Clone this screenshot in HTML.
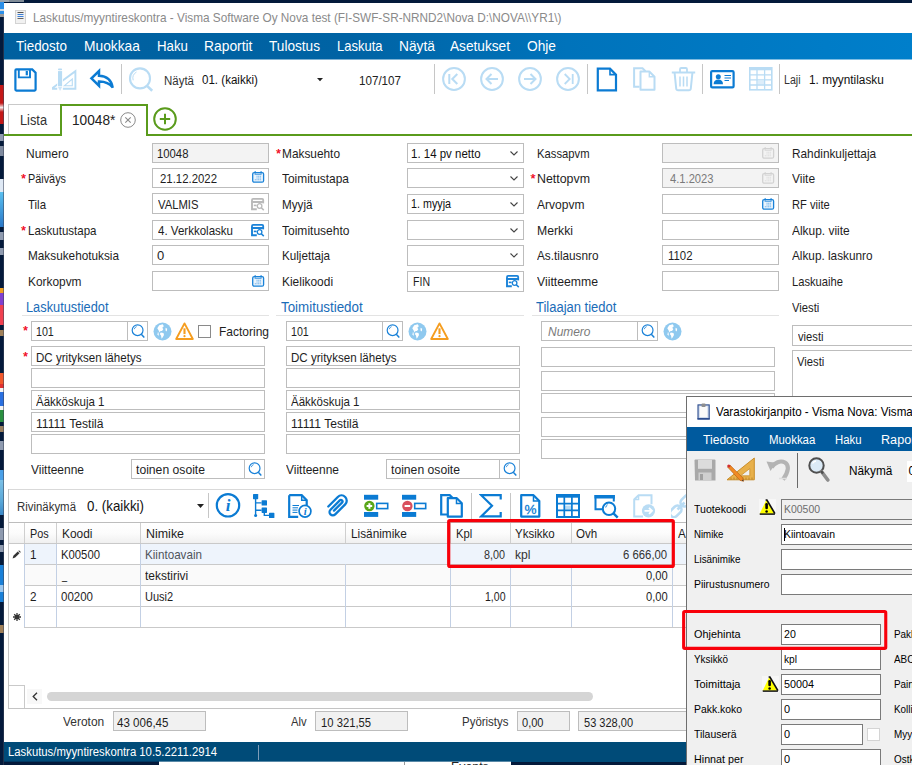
<!DOCTYPE html>
<html lang="fi"><head><meta charset="utf-8"><title>Laskutus/myyntireskontra</title>
<style>
html,body{margin:0;padding:0;overflow:hidden;}
body{width:912px;height:765px;overflow:hidden;position:relative;background:#fff;font-family:"Liberation Sans",sans-serif;}
#root{position:absolute;left:0;top:0;width:912px;height:765px;overflow:hidden;}
#root div,#root span,#root svg{position:absolute;box-sizing:border-box;white-space:pre;}
#root span{transform-origin:0 0;}

</style></head><body><div id="root">
<div style="left:0px;top:0px;width:912px;height:765px;background:#041a3b;"></div>
<div style="left:0px;top:0px;width:9px;height:2px;background:#9aa5b0;"></div>
<div style="left:9px;top:0px;width:15px;height:2px;background:#808c98;"></div>
<div style="left:0px;top:0px;width:4px;height:2px;background:#9aa5b0;"></div>
<div style="left:0px;top:2px;width:4px;height:7px;background:#2b8fe8;"></div>
<div style="left:0px;top:9px;width:4px;height:2px;background:#c9d6e2;"></div>
<div style="left:0px;top:11px;width:4px;height:3px;background:#2b8fe8;"></div>
<div style="left:0px;top:14px;width:4px;height:3px;background:#9a9a9a;"></div>
<div style="left:0px;top:85px;width:4px;height:18px;background:#c41818;"></div>
<div style="left:0px;top:103px;width:4px;height:9px;background:linear-gradient(#c41818,#f4e9e9 50%,#c41818);"></div>
<div style="left:0px;top:112px;width:4px;height:12px;background:#c41818;"></div>
<div style="left:0px;top:134px;width:4px;height:7px;background:#8f9bb0;"></div>
<div style="left:0px;top:146px;width:4px;height:10px;background:#7f8ba0;"></div>
<div style="left:0px;top:179px;width:4px;height:13px;background:#dfe9f5;"></div>
<div style="left:0px;top:192px;width:4px;height:35px;background:linear-gradient(#5ac0f0,#2a78c8);"></div>
<div style="left:0px;top:232px;width:4px;height:8px;background:#8f9bb0;"></div>
<div style="left:0px;top:248px;width:4px;height:7px;background:#8f9bb0;"></div>
<div style="left:0px;top:288px;width:4px;height:5px;background:#f0a020;"></div>
<div style="left:0px;top:293px;width:4px;height:12px;background:#8040d0;"></div>
<div style="left:0px;top:305px;width:4px;height:20px;background:#f04050;"></div>
<div style="left:0px;top:330px;width:4px;height:6px;background:#a0805a;"></div>
<div style="left:0px;top:373px;width:4px;height:11px;background:#f0582c;"></div>
<div style="left:0px;top:384px;width:4px;height:4px;background:#e03030;"></div>
<div style="left:0px;top:388px;width:4px;height:4px;background:#f4f4f4;"></div>
<div style="left:0px;top:392px;width:4px;height:14px;background:#2a70e0;"></div>
<div style="left:0px;top:406px;width:4px;height:4px;background:#f4f4f4;"></div>
<div style="left:0px;top:410px;width:4px;height:12px;background:#2a9040;"></div>
<div style="left:0px;top:426px;width:4px;height:6px;background:#9a8060;"></div>
<div style="left:0px;top:441px;width:4px;height:9px;background:#8f9bb0;"></div>
<div style="left:0px;top:470px;width:4px;height:10px;background:#4aa0e8;"></div>
<div style="left:0px;top:480px;width:4px;height:35px;background:linear-gradient(#7cc0e6,#5aa8d8 60%,#3a88c8);"></div>
<div style="left:0px;top:528px;width:4px;height:12px;background:#8f9bb0;"></div>
<div style="left:0px;top:545px;width:4px;height:7px;background:#8f9bb0;"></div>
<div style="left:0px;top:565px;width:4px;height:20px;background:#1a80d8;"></div>
<div style="left:0px;top:585px;width:4px;height:7px;background:#9cc8f0;"></div>
<div style="left:0px;top:592px;width:4px;height:10px;background:#1a80d8;"></div>
<div style="left:0px;top:625px;width:4px;height:8px;background:#a0805a;"></div>
<div style="left:3px;top:17px;width:1px;height:748px;background:rgba(60,70,90,0.55);"></div>
<div style="left:4px;top:3px;width:908px;height:759px;background:#ffffff;"></div>
<div style="left:4px;top:762px;width:155px;height:3px;background:#041a3b;"></div>
<div style="left:159px;top:762px;width:352px;height:3px;background:#ffffff;"></div>
<div style="left:404px;top:762px;width:1px;height:3px;background:#999;"></div>
<div style="left:511px;top:762px;width:401px;height:3px;background:#041a3b;"></div>
<svg style="left:15px;top:10px;" width="11" height="14" viewBox="0 0 11 14"><rect x="0.5" y="0.5" width="10" height="13" fill="#f1f1f1" stroke="#d3d3d3"/><rect x="2.5" y="2" width="6" height="1" fill="#555"/><rect x="2.5" y="4" width="6" height="1" fill="#3d7fd6"/><rect x="2.5" y="6" width="6" height="1" fill="#3d7fd6"/><rect x="2.5" y="8" width="6" height="1" fill="#666"/></svg>
<span style="left:32.80px;top:11.00px;font-size:13px;line-height:13px;color:#8a8a8a;transform:scaleX(0.906);">Laskutus/myyntireskontra - Visma Software Oy Nova test (FI-SWF-SR-NRND2\Nova D:\NOVA\\YR1\)</span>
<div style="left:4px;top:33px;width:908px;height:27px;background:linear-gradient(90deg,#00609f 0%,#0063a4 38%,#0073bb 62%,#007fcb 100%);"></div>
<div style="left:4px;top:59px;width:908px;height:1px;background:rgba(255,255,255,0.5);"></div>
<span style="left:15.50px;top:38.68px;font-size:14.2px;line-height:14.2px;color:#fff;transform:scaleX(0.946);">Tiedosto</span>
<span style="left:83.50px;top:38.68px;font-size:14.2px;line-height:14.2px;color:#fff;transform:scaleX(0.972);">Muokkaa</span>
<span style="left:156.50px;top:38.68px;font-size:14.2px;line-height:14.2px;color:#fff;transform:scaleX(0.935);">Haku</span>
<span style="left:203.50px;top:38.68px;font-size:14.2px;line-height:14.2px;color:#fff;transform:scaleX(0.975);">Raportit</span>
<span style="left:268.50px;top:38.68px;font-size:14.2px;line-height:14.2px;color:#fff;transform:scaleX(0.960);">Tulostus</span>
<span style="left:336.50px;top:38.68px;font-size:14.2px;line-height:14.2px;color:#fff;transform:scaleX(0.915);">Laskuta</span>
<span style="left:398.50px;top:38.68px;font-size:14.2px;line-height:14.2px;color:#fff;transform:scaleX(0.970);">Näytä</span>
<span style="left:450.00px;top:38.68px;font-size:14.2px;line-height:14.2px;color:#fff;transform:scaleX(0.962);">Asetukset</span>
<span style="left:526.50px;top:38.68px;font-size:14.2px;line-height:14.2px;color:#fff;transform:scaleX(0.967);">Ohje</span>
<div style="left:121px;top:64px;width:1px;height:30px;background:#c6c6c6;"></div>
<div style="left:434px;top:64px;width:1px;height:30px;background:#c6c6c6;"></div>
<div style="left:587px;top:64px;width:1px;height:30px;background:#c6c6c6;"></div>
<div style="left:702px;top:64px;width:1px;height:30px;background:#c6c6c6;"></div>
<div style="left:779px;top:64px;width:1px;height:30px;background:#c6c6c6;"></div>
<span style="left:164.30px;top:74.59px;font-size:12.3px;line-height:12.3px;color:#333;transform:scaleX(0.934);">Näytä</span>
<span style="left:201.50px;top:74.14px;font-size:12px;line-height:12px;color:#111;transform:scaleX(0.964);">01. (kaikki)</span>
<svg style="left:316.5px;top:78.2px;" width="6" height="4" viewBox="0 0 6 4"><path d="M0 0h6l-3 3.200z" fill="#222"/></svg>
<span style="left:358.70px;top:74.84px;font-size:12px;line-height:12px;color:#222;transform:scaleX(0.968);">107/107</span>
<span style="left:784.30px;top:74.22px;font-size:12.5px;line-height:12.5px;color:#333;transform:scaleX(0.848);">Laji</span>
<span style="left:809.40px;top:73.64px;font-size:12px;line-height:12px;color:#111;transform:scaleX(0.984);">1. myyntilasku</span>
<div style="left:8px;top:104px;width:53px;height:31px;background:#fff;border:1px solid #c9c9c9;"></div>
<div style="left:4px;top:134px;width:908px;height:2px;background:#5a9b1c;"></div>
<div style="left:60px;top:104px;width:88px;height:32px;background:#fff;border:2px solid #5a9b1c;border-bottom:none;"></div>
<span style="left:20.00px;top:112.65px;font-size:14px;line-height:14px;color:#333;transform:scaleX(0.913);">Lista</span>
<span style="left:71.80px;top:112.65px;font-size:14px;line-height:14px;color:#222;transform:scaleX(0.978);">10048*</span>
<svg style="left:120px;top:112px;" width="16" height="16" viewBox="0 0 16 16"><circle cx="8" cy="8" r="7.3" fill="none" stroke="#8a8a8a" stroke-width="1"/><path d="M5.3 5.3l5.4 5.4M10.7 5.3l-5.4 5.4" stroke="#8a8a8a" stroke-width="1.1"/></svg>
<svg style="left:153px;top:107px;" width="24" height="24" viewBox="0 0 24 24"><circle cx="12" cy="12" r="10.8" fill="none" stroke="#5a9b1c" stroke-width="2"/><path d="M12 6.8v10.4M6.8 12h10.4" stroke="#5a9b1c" stroke-width="2"/></svg>
<svg style="left:14px;top:67.5px;" width="24" height="24" viewBox="0 0 24 24"><path d="M1.400 2.400a1 1 0 0 1 1-1h15.800l3.400 3.400v16.800a1 1 0 0 1-1 1H2.400a1 1 0 0 1-1-1z" fill="#fff" stroke="#0b7bd3" stroke-width="2.200"/><path d="M4.800 1.400v8h11.200v-8" fill="none" stroke="#0b7bd3" stroke-width="1.900"/><rect x="11.700" y="3" width="2.200" height="4.300" fill="#0b7bd3"/></svg>
<svg style="left:52px;top:67.5px;" width="25" height="24" viewBox="0 0 25 24"><path d="M-0.500 20.800L23.400 3.200V20.800z" fill="none" stroke="#b9dcf4" stroke-width="1.900"/><path d="M12.200 17.800L20.300 11V17.800z" fill="none" stroke="#b9dcf4" stroke-width="1.100"/><rect x="5.200" y="0" width="5.700" height="24" fill="#fff"/><rect x="6" y="0.600" width="4.100" height="1.700" rx="0.800" fill="#b9dcf4"/><rect x="6" y="3.100" width="4.100" height="15.200" fill="#b9dcf4"/><path d="M6 18.900h4.100l-2.050 4z" fill="#cfe6f7"/></svg>
<svg style="left:89px;top:68px;" width="26" height="23" viewBox="0 0 26 23"><path d="M2.400 10.300L10 3V7.800C17 8 22.300 11.500 23.700 19.600C20.500 15.300 16.500 13.500 10 13.600V17.700z" fill="#fff" stroke="#0b7bd3" stroke-width="2.500" stroke-linejoin="miter"/></svg>
<svg style="left:128px;top:66.5px;" width="26" height="26" viewBox="0 0 26 26"><circle cx="12" cy="11.400" r="10" fill="none" stroke="#b9dcf4" stroke-width="2.100"/><path d="M5.200 13.300a7.300 7.300 0 0 1 3.300-8.300" fill="none" stroke="#b9dcf4" stroke-width="1"/><path d="M18.800 18.600l5.400 5.200" stroke="#b9dcf4" stroke-width="2.600"/></svg>
<svg style="left:441.2px;top:65.9px;" width="26" height="26" viewBox="0 0 26 26"><circle cx="13" cy="13" r="10.900" fill="none" stroke="#b9dcf4" stroke-width="2"/><path d="M8.300 8v10M16.300 8l-5 5l5 5" fill="none" stroke="#b9dcf4" stroke-width="2"/></svg>
<svg style="left:479.1px;top:65.9px;" width="26" height="26" viewBox="0 0 26 26"><circle cx="13" cy="13" r="10.900" fill="none" stroke="#b9dcf4" stroke-width="2"/><path d="M7.500 13h11.500M12.500 8l-5 5l5 5" fill="none" stroke="#b9dcf4" stroke-width="2"/></svg>
<svg style="left:516.9px;top:65.9px;" width="26" height="26" viewBox="0 0 26 26"><circle cx="13" cy="13" r="10.900" fill="none" stroke="#b9dcf4" stroke-width="2"/><path d="M7 13h11.500M13.500 8l5 5l-5 5" fill="none" stroke="#b9dcf4" stroke-width="2"/></svg>
<svg style="left:554.8px;top:65.9px;" width="26" height="26" viewBox="0 0 26 26"><circle cx="13" cy="13" r="10.900" fill="none" stroke="#b9dcf4" stroke-width="2"/><path d="M17.700 8v10M9.700 8l5 5l-5 5" fill="none" stroke="#b9dcf4" stroke-width="1.800"/></svg>
<svg style="left:596px;top:66.5px;" width="22" height="25" viewBox="0 0 22 25"><path d="M1.800 1.600h12.200l6 6v15.700H1.800z" fill="#fff" stroke="#0b7bd3" stroke-width="2.200" stroke-linejoin="miter"/><path d="M14 1.600v6h6" fill="none" stroke="#0b7bd3" stroke-width="1.600"/></svg>
<svg style="left:633px;top:67px;" width="24" height="24" viewBox="0 0 24 24"><path d="M6.500 19.800H1.100V1.200h8.400l3 3" fill="none" stroke="#b9dcf4" stroke-width="2"/><path d="M7.500 4.500h8.800l5.200 5.200v13H7.500z" fill="#fff" stroke="#b9dcf4" stroke-width="2" stroke-linejoin="round"/><path d="M16.300 4.500v5.200h5.200" fill="none" stroke="#b9dcf4" stroke-width="1.400"/></svg>
<svg style="left:670.5px;top:66.5px;" width="25" height="25" viewBox="0 0 25 25"><path d="M0.800 5.500h23.400" stroke="#b9dcf4" stroke-width="2"/><path d="M9 5v-2.800a1.200 1.200 0 0 1 1.200-1.200h4.600a1.200 1.200 0 0 1 1.200 1.200V5" fill="none" stroke="#b9dcf4" stroke-width="1.800"/><path d="M3.600 6l1.600 15.500a2 2 0 0 0 2 1.800h10.600a2 2 0 0 0 2-1.800L21.400 6" fill="none" stroke="#b9dcf4" stroke-width="2"/><path d="M9 9.500v10M12.500 9.500v10M16 9.500v10" stroke="#b9dcf4" stroke-width="1.500"/></svg>
<svg style="left:709.5px;top:69.5px;" width="25" height="19" viewBox="0 0 25 19"><rect x="1.100" y="1.100" width="22.500" height="16.300" rx="1.200" fill="#fff" stroke="#0b7bd3" stroke-width="2.200"/><circle cx="8.300" cy="6.700" r="2.500" fill="#0b7bd3"/><path d="M3.600 14.200c0-3.200 2-4.700 4.700-4.700s4.700 1.500 4.700 4.700z" fill="#0b7bd3"/><path d="M14.500 5.500h6.500M14.500 8h6.500M14.500 10.500h4.500" stroke="#0b7bd3" stroke-width="1.100"/></svg>
<svg style="left:748.5px;top:67px;" width="24" height="24" viewBox="0 0 24 24"><rect x="0.800" y="0.800" width="22" height="22" fill="#fff" stroke="#b9dcf4" stroke-width="1.600"/><rect x="0.800" y="0.300" width="22" height="3" fill="#b9dcf4"/><rect x="8.600" y="13.800" width="6.500" height="3.800" fill="#dcedfa"/><path d="M8 2v21M15.600 2v21M0.800 7.800h22M0.800 12.900h22M0.800 18h22" stroke="#b9dcf4" stroke-width="1.300"/></svg>
<span style="left:26.00px;top:147.40px;font-size:13px;line-height:13px;color:#1e1e1e;transform:scaleX(0.923);">Numero</span>
<span style="left:27.50px;top:172.30px;font-size:13px;line-height:13px;color:#1e1e1e;transform:scaleX(0.835);">Päiväys</span>
<span style="left:27.50px;top:197.70px;font-size:13px;line-height:13px;color:#1e1e1e;transform:scaleX(0.880);">Tila</span>
<span style="left:27.50px;top:223.50px;font-size:13px;line-height:13px;color:#1e1e1e;transform:scaleX(0.886);">Laskutustapa</span>
<span style="left:27.50px;top:248.80px;font-size:13px;line-height:13px;color:#1e1e1e;transform:scaleX(0.906);">Maksukehotuksia</span>
<span style="left:27.50px;top:274.90px;font-size:13px;line-height:13px;color:#1e1e1e;transform:scaleX(0.914);">Korkopvm</span>
<span style="left:20.90px;top:172.00px;font-size:13px;line-height:13px;color:#f0142a;text-shadow:0 0 0.4px #f0142a;">*</span>
<span style="left:20.90px;top:224.00px;font-size:13px;line-height:13px;color:#f0142a;text-shadow:0 0 0.4px #f0142a;">*</span>
<div style="left:152px;top:143px;width:117px;height:20px;background:#f3f3f3;border:1px solid #bdbdbd;"></div>
<div style="left:152px;top:168px;width:117px;height:20px;background:#fff;border:1px solid #bdbdbd;"></div>
<div style="left:152px;top:193px;width:117px;height:21px;background:#fff;border:1px solid #bdbdbd;"></div>
<div style="left:152px;top:220px;width:117px;height:20px;background:#fff;border:1px solid #bdbdbd;"></div>
<div style="left:152px;top:245px;width:117px;height:20px;background:#fff;border:1px solid #bdbdbd;"></div>
<div style="left:152px;top:271px;width:117px;height:20px;background:#fff;border:1px solid #bdbdbd;"></div>
<span style="left:157.30px;top:147.40px;font-size:13px;line-height:13px;color:#1e1e1e;transform:scaleX(0.869);">10048</span>
<span style="left:159.50px;top:172.30px;font-size:13px;line-height:13px;color:#1e1e1e;transform:scaleX(0.876);">21.12.2022</span>
<span style="left:157.50px;top:197.70px;font-size:13px;line-height:13px;color:#1e1e1e;transform:scaleX(0.867);">VALMIS</span>
<span style="left:157.50px;top:223.50px;font-size:13px;line-height:13px;color:#1e1e1e;transform:scaleX(0.887);">4. Verkkolasku</span>
<span style="left:157.00px;top:248.80px;font-size:13px;line-height:13px;color:#1e1e1e;">0</span>
<svg style="left:251.5px;top:171.29999999999998px;" width="13" height="12" viewBox="0 0 13 12"><rect x="0.700" y="1.600" width="10.900" height="9.600" rx="1.500" fill="#eaf4fc" stroke="#1a82d8" stroke-width="1.300"/><path d="M3.200 0.200v2.200M9.100 0.200v2.200" stroke="#1a82d8" stroke-width="1.300"/><path d="M2.600 3.300h7" stroke="#1a82d8" stroke-width="0.800"/><path d="M4.500 5.200h5M4.500 7h5M2.800 8.800h6.700" stroke="#6db0ea" stroke-width="1.100" stroke-dasharray="1.100 0.550"/></svg>
<svg style="left:251px;top:198.10000000000002px;" width="14" height="13" viewBox="0 0 14 13"><rect x="1" y="0.900" width="11.200" height="3.100" rx="1.100" fill="none" stroke="#b9b9b9" stroke-width="1.800"/><path d="M1 3v8.200h4.800" fill="none" stroke="#b9b9b9" stroke-width="1.900"/><path d="M12.200 3v2.400" stroke="#b9b9b9" stroke-width="1.800"/><path d="M2.800 7.400h2.800" stroke="#b9b9b9" stroke-width="1.600"/><circle cx="8.600" cy="8" r="2.300" fill="none" stroke="#b9b9b9" stroke-width="1.300"/><path d="M10.300 9.700l2.500 2.400" stroke="#b9b9b9" stroke-width="1.500"/></svg>
<svg style="left:251px;top:224.3px;" width="14" height="13" viewBox="0 0 14 13"><rect x="1" y="0.900" width="11.200" height="3.100" rx="1.100" fill="none" stroke="#1a82d8" stroke-width="1.800"/><path d="M1 3v8.200h4.800" fill="none" stroke="#1a82d8" stroke-width="1.900"/><path d="M12.200 3v2.400" stroke="#1a82d8" stroke-width="1.800"/><path d="M2.800 7.400h2.800" stroke="#1a82d8" stroke-width="1.600"/><circle cx="8.600" cy="8" r="2.300" fill="none" stroke="#1a82d8" stroke-width="1.300"/><path d="M10.300 9.700l2.500 2.400" stroke="#1a82d8" stroke-width="1.500"/></svg>
<svg style="left:251.5px;top:275.1px;" width="13" height="12" viewBox="0 0 13 12"><rect x="0.700" y="1.600" width="10.900" height="9.600" rx="1.500" fill="#eaf4fc" stroke="#1a82d8" stroke-width="1.300"/><path d="M3.200 0.200v2.200M9.100 0.200v2.200" stroke="#1a82d8" stroke-width="1.300"/><path d="M2.600 3.300h7" stroke="#1a82d8" stroke-width="0.800"/><path d="M4.500 5.200h5M4.500 7h5M2.800 8.800h6.700" stroke="#6db0ea" stroke-width="1.100" stroke-dasharray="1.100 0.550"/></svg>
<span style="left:282.00px;top:147.40px;font-size:13px;line-height:13px;color:#1e1e1e;transform:scaleX(0.912);">Maksuehto</span>
<span style="left:282.00px;top:172.30px;font-size:13px;line-height:13px;color:#1e1e1e;transform:scaleX(0.918);">Toimitustapa</span>
<span style="left:282.00px;top:197.70px;font-size:13px;line-height:13px;color:#1e1e1e;transform:scaleX(0.898);">Myyjä</span>
<span style="left:282.00px;top:223.50px;font-size:13px;line-height:13px;color:#1e1e1e;transform:scaleX(0.925);">Toimitusehto</span>
<span style="left:282.00px;top:248.80px;font-size:13px;line-height:13px;color:#1e1e1e;transform:scaleX(0.898);">Kuljettaja</span>
<span style="left:282.00px;top:274.90px;font-size:13px;line-height:13px;color:#1e1e1e;transform:scaleX(0.917);">Kielikoodi</span>
<span style="left:275.90px;top:147.00px;font-size:13px;line-height:13px;color:#f0142a;text-shadow:0 0 0.4px #f0142a;">*</span>
<div style="left:407px;top:143px;width:117px;height:20px;background:#fff;border:1px solid #bdbdbd;"></div>
<svg style="left:509.5px;top:151px;" width="8" height="5" viewBox="0 0 8 5"><path d="M0.5 0.5l3.5 3.5l3.5-3.5" fill="none" stroke="#444" stroke-width="1.1"/></svg>
<div style="left:407px;top:168px;width:117px;height:20px;background:#fff;border:1px solid #bdbdbd;"></div>
<svg style="left:509.5px;top:176px;" width="8" height="5" viewBox="0 0 8 5"><path d="M0.5 0.5l3.5 3.5l3.5-3.5" fill="none" stroke="#444" stroke-width="1.1"/></svg>
<div style="left:407px;top:194px;width:117px;height:20px;background:#fff;border:1px solid #bdbdbd;"></div>
<svg style="left:509.5px;top:202px;" width="8" height="5" viewBox="0 0 8 5"><path d="M0.5 0.5l3.5 3.5l3.5-3.5" fill="none" stroke="#444" stroke-width="1.1"/></svg>
<div style="left:407px;top:220px;width:117px;height:20px;background:#fff;border:1px solid #bdbdbd;"></div>
<svg style="left:509.5px;top:228px;" width="8" height="5" viewBox="0 0 8 5"><path d="M0.5 0.5l3.5 3.5l3.5-3.5" fill="none" stroke="#444" stroke-width="1.1"/></svg>
<div style="left:407px;top:245px;width:117px;height:21px;background:#fff;border:1px solid #bdbdbd;"></div>
<svg style="left:509.5px;top:253px;" width="8" height="5" viewBox="0 0 8 5"><path d="M0.5 0.5l3.5 3.5l3.5-3.5" fill="none" stroke="#444" stroke-width="1.1"/></svg>
<div style="left:407px;top:271px;width:117px;height:21px;background:#fff;border:1px solid #bdbdbd;"></div>
<span style="left:410.50px;top:147.74px;font-size:12px;line-height:12px;color:#111;transform:scaleX(0.956);">1. 14 pv netto</span>
<span style="left:410.50px;top:198.04px;font-size:12px;line-height:12px;color:#111;transform:scaleX(0.895);">1. myyja</span>
<span style="left:413.20px;top:274.90px;font-size:13px;line-height:13px;color:#1e1e1e;transform:scaleX(0.812);">FIN</span>
<svg style="left:506px;top:275.3px;" width="14" height="13" viewBox="0 0 14 13"><rect x="1" y="0.900" width="11.200" height="3.100" rx="1.100" fill="none" stroke="#1a82d8" stroke-width="1.800"/><path d="M1 3v8.200h4.800" fill="none" stroke="#1a82d8" stroke-width="1.900"/><path d="M12.200 3v2.400" stroke="#1a82d8" stroke-width="1.800"/><path d="M2.800 7.400h2.800" stroke="#1a82d8" stroke-width="1.600"/><circle cx="8.600" cy="8" r="2.300" fill="none" stroke="#1a82d8" stroke-width="1.300"/><path d="M10.300 9.700l2.500 2.400" stroke="#1a82d8" stroke-width="1.500"/></svg>
<span style="left:536.50px;top:147.40px;font-size:13px;line-height:13px;color:#1e1e1e;transform:scaleX(0.865);">Kassapvm</span>
<span style="left:536.50px;top:172.30px;font-size:13px;line-height:13px;color:#1e1e1e;transform:scaleX(0.953);">Nettopvm</span>
<span style="left:536.50px;top:197.70px;font-size:13px;line-height:13px;color:#1e1e1e;transform:scaleX(0.926);">Arvopvm</span>
<span style="left:536.50px;top:223.50px;font-size:13px;line-height:13px;color:#1e1e1e;transform:scaleX(0.940);">Merkki</span>
<span style="left:536.50px;top:248.80px;font-size:13px;line-height:13px;color:#1e1e1e;transform:scaleX(0.905);">As.tilausnro</span>
<span style="left:536.50px;top:274.90px;font-size:13px;line-height:13px;color:#1e1e1e;transform:scaleX(0.942);">Viitteemme</span>
<span style="left:530.40px;top:172.00px;font-size:13px;line-height:13px;color:#f0142a;text-shadow:0 0 0.4px #f0142a;">*</span>
<div style="left:662px;top:143px;width:117px;height:20px;background:#f3f3f3;border:1px solid #bdbdbd;"></div>
<div style="left:662px;top:168px;width:117px;height:20px;background:#f3f3f3;border:1px solid #bdbdbd;"></div>
<div style="left:662px;top:194px;width:117px;height:20px;background:#fff;border:1px solid #bdbdbd;"></div>
<div style="left:662px;top:220px;width:117px;height:20px;background:#fff;border:1px solid #bdbdbd;"></div>
<div style="left:662px;top:245px;width:117px;height:20px;background:#fff;border:1px solid #bdbdbd;"></div>
<div style="left:662px;top:271px;width:117px;height:20px;background:#fff;border:1px solid #bdbdbd;"></div>
<svg style="left:762px;top:147.1px;" width="13" height="12" viewBox="0 0 13 12"><rect x="0.700" y="1.600" width="10.900" height="9.600" rx="1.500" fill="#f3f3f3" stroke="#d2d2d2" stroke-width="1.300"/><path d="M3.200 0.200v2.200M9.100 0.200v2.200" stroke="#d2d2d2" stroke-width="1.300"/><path d="M2.600 3.300h7" stroke="#d2d2d2" stroke-width="0.800"/><path d="M4.500 5.200h5M4.500 7h5M2.800 8.800h6.700" stroke="#dcdcdc" stroke-width="1.100" stroke-dasharray="1.100 0.550"/></svg>
<svg style="left:762px;top:172.1px;" width="13" height="12" viewBox="0 0 13 12"><rect x="0.700" y="1.600" width="10.900" height="9.600" rx="1.500" fill="#f3f3f3" stroke="#d2d2d2" stroke-width="1.300"/><path d="M3.200 0.200v2.200M9.100 0.200v2.200" stroke="#d2d2d2" stroke-width="1.300"/><path d="M2.600 3.300h7" stroke="#d2d2d2" stroke-width="0.800"/><path d="M4.500 5.200h5M4.500 7h5M2.800 8.800h6.700" stroke="#dcdcdc" stroke-width="1.100" stroke-dasharray="1.100 0.550"/></svg>
<svg style="left:762px;top:198.1px;" width="13" height="12" viewBox="0 0 13 12"><rect x="0.700" y="1.600" width="10.900" height="9.600" rx="1.500" fill="#eaf4fc" stroke="#1a82d8" stroke-width="1.300"/><path d="M3.200 0.200v2.200M9.100 0.200v2.200" stroke="#1a82d8" stroke-width="1.300"/><path d="M2.600 3.300h7" stroke="#1a82d8" stroke-width="0.800"/><path d="M4.500 5.200h5M4.500 7h5M2.800 8.800h6.700" stroke="#6db0ea" stroke-width="1.100" stroke-dasharray="1.100 0.550"/></svg>
<span style="left:669.50px;top:172.30px;font-size:13px;line-height:13px;color:#7a7a7a;transform:scaleX(0.860);">4.1.2023</span>
<span style="left:667.50px;top:248.80px;font-size:13px;line-height:13px;color:#1e1e1e;transform:scaleX(0.876);">1102</span>
<span style="left:791.80px;top:147.40px;font-size:13px;line-height:13px;color:#1e1e1e;transform:scaleX(0.909);">Rahdinkuljettaja</span>
<span style="left:791.80px;top:172.30px;font-size:13px;line-height:13px;color:#1e1e1e;transform:scaleX(0.922);">Viite</span>
<span style="left:791.80px;top:197.70px;font-size:13px;line-height:13px;color:#1e1e1e;transform:scaleX(0.856);">RF viite</span>
<span style="left:791.80px;top:223.50px;font-size:13px;line-height:13px;color:#1e1e1e;transform:scaleX(0.918);">Alkup. viite</span>
<span style="left:791.80px;top:248.80px;font-size:13px;line-height:13px;color:#1e1e1e;transform:scaleX(0.906);">Alkup. laskunro</span>
<span style="left:791.80px;top:274.90px;font-size:13px;line-height:13px;color:#1e1e1e;transform:scaleX(0.859);">Laskuaihe</span>
<span style="left:26.00px;top:300.45px;font-size:14px;line-height:14px;color:#1a6cb8;transform:scaleX(0.914);">Laskutustiedot</span>
<div style="left:22px;top:315px;width:247px;height:1px;background:#e3e3e3;"></div>
<span style="left:22.90px;top:324.20px;font-size:13px;line-height:13px;color:#f0142a;text-shadow:0 0 0.4px #f0142a;">*</span>
<span style="left:22.90px;top:350.20px;font-size:13px;line-height:13px;color:#f0142a;text-shadow:0 0 0.4px #f0142a;">*</span>
<div style="left:31px;top:321px;width:117px;height:20px;background:#fff;border:1px solid #bdbdbd;"></div>
<div style="left:127px;top:322px;width:1px;height:18px;background:#bdbdbd;"></div>
<span style="left:36.00px;top:325.20px;font-size:13px;line-height:13px;color:#1e1e1e;transform:scaleX(0.821);">101</span>
<svg style="left:131px;top:324px;" width="14" height="14" viewBox="0 0 14 14"><circle cx="6.6" cy="6.2" r="5.4" fill="none" stroke="#1a82d8" stroke-width="1.2"/><path d="M3.2 5.2a3.6 3.6 0 0 1 2.4-2.6" fill="none" stroke="#1a82d8" stroke-width="0.8"/><path d="M10.3 10.2l3 3.2" stroke="#1a82d8" stroke-width="1.5"/></svg>
<svg style="left:152.5px;top:321.5px;" width="19" height="19" viewBox="0 0 19 19"><circle cx="9.5" cy="9.500" r="9" fill="#8fc9ef"/><path d="M6.200 3.200L9.800 2.300L10.800 4.300L9.300 5.800L10.300 7.300L9 9H7.500L6.700 10.600L5.500 8.300L4.300 6.200z" fill="#fff"/><path d="M7.800 10.500L10.500 11L11 13L9.600 15.400L8.600 16.700L8 13.500L6.800 12z" fill="#fff"/><path d="M12.600 5.800L14.200 6.800L13.700 9.600L12.500 8.600z" fill="#fff"/><path d="M5 9.500l1 2.500l-.3 2l-1.300-1.800z" fill="#fff" opacity=".8"/></svg>
<svg style="left:174.5px;top:321.5px;" width="19" height="19" viewBox="0 0 19 19"><path d="M9.500 1.400L17.800 17H1.200z" fill="#fff" stroke="#f59d1f" stroke-width="1.900" stroke-linejoin="round"/><path d="M9.500 6.300v5.800" stroke="#f59d1f" stroke-width="2.100"/><circle cx="9.500" cy="14.200" r="1.100" fill="#f59d1f"/></svg>
<div style="left:198px;top:325px;width:13px;height:13px;background:#fff;border:1px solid #8a8a8a;"></div>
<span style="left:218.50px;top:325.20px;font-size:13px;line-height:13px;color:#1e1e1e;transform:scaleX(0.923);">Factoring</span>
<div style="left:31px;top:346px;width:234px;height:20px;background:#fff;border:1px solid #bdbdbd;"></div>
<div style="left:31px;top:368px;width:234px;height:20px;background:#fff;border:1px solid #bdbdbd;"></div>
<div style="left:31px;top:390px;width:234px;height:20px;background:#fff;border:1px solid #bdbdbd;"></div>
<div style="left:31px;top:412px;width:234px;height:20px;background:#fff;border:1px solid #bdbdbd;"></div>
<div style="left:31px;top:434px;width:234px;height:20px;background:#fff;border:1px solid #bdbdbd;"></div>
<span style="left:36.00px;top:350.90px;font-size:13px;line-height:13px;color:#1e1e1e;transform:scaleX(0.890);">DC yrityksen lähetys</span>
<span style="left:36.00px;top:395.00px;font-size:13px;line-height:13px;color:#1e1e1e;transform:scaleX(0.886);">Ääkköskuja 1</span>
<span style="left:36.00px;top:417.00px;font-size:13px;line-height:13px;color:#1e1e1e;transform:scaleX(0.931);">11111 Testilä</span>
<span style="left:30.90px;top:463.20px;font-size:13px;line-height:13px;color:#1e1e1e;transform:scaleX(0.920);">Viitteenne</span>
<div style="left:131px;top:459px;width:134px;height:20px;background:#fff;border:1px solid #bdbdbd;"></div>
<div style="left:244px;top:460px;width:1px;height:18px;background:#bdbdbd;"></div>
<span style="left:135.90px;top:463.20px;font-size:13px;line-height:13px;color:#1e1e1e;transform:scaleX(0.936);">toinen osoite</span>
<svg style="left:248px;top:462px;" width="14" height="14" viewBox="0 0 14 14"><circle cx="6.6" cy="6.2" r="5.4" fill="none" stroke="#1a82d8" stroke-width="1.2"/><path d="M3.2 5.2a3.6 3.6 0 0 1 2.4-2.6" fill="none" stroke="#1a82d8" stroke-width="0.8"/><path d="M10.3 10.2l3 3.2" stroke="#1a82d8" stroke-width="1.5"/></svg>
<span style="left:280.50px;top:300.45px;font-size:14px;line-height:14px;color:#1a6cb8;transform:scaleX(0.954);">Toimitustiedot</span>
<div style="left:276px;top:315px;width:248px;height:1px;background:#e3e3e3;"></div>
<div style="left:286px;top:321px;width:117px;height:20px;background:#fff;border:1px solid #bdbdbd;"></div>
<div style="left:382px;top:322px;width:1px;height:18px;background:#bdbdbd;"></div>
<span style="left:291.30px;top:325.20px;font-size:13px;line-height:13px;color:#1e1e1e;transform:scaleX(0.821);">101</span>
<svg style="left:386px;top:324px;" width="14" height="14" viewBox="0 0 14 14"><circle cx="6.6" cy="6.2" r="5.4" fill="none" stroke="#1a82d8" stroke-width="1.2"/><path d="M3.2 5.2a3.6 3.6 0 0 1 2.4-2.6" fill="none" stroke="#1a82d8" stroke-width="0.8"/><path d="M10.3 10.2l3 3.2" stroke="#1a82d8" stroke-width="1.5"/></svg>
<svg style="left:408px;top:321.5px;" width="19" height="19" viewBox="0 0 19 19"><circle cx="9.5" cy="9.500" r="9" fill="#8fc9ef"/><path d="M6.200 3.200L9.800 2.300L10.800 4.300L9.300 5.800L10.300 7.300L9 9H7.500L6.700 10.600L5.500 8.300L4.300 6.200z" fill="#fff"/><path d="M7.800 10.500L10.500 11L11 13L9.600 15.400L8.600 16.700L8 13.500L6.800 12z" fill="#fff"/><path d="M12.600 5.800L14.200 6.800L13.700 9.600L12.500 8.600z" fill="#fff"/><path d="M5 9.500l1 2.500l-.3 2l-1.300-1.800z" fill="#fff" opacity=".8"/></svg>
<svg style="left:430px;top:321.5px;" width="19" height="19" viewBox="0 0 19 19"><path d="M9.500 1.400L17.800 17H1.200z" fill="#fff" stroke="#f59d1f" stroke-width="1.900" stroke-linejoin="round"/><path d="M9.500 6.300v5.800" stroke="#f59d1f" stroke-width="2.100"/><circle cx="9.500" cy="14.200" r="1.100" fill="#f59d1f"/></svg>
<div style="left:286px;top:346px;width:234px;height:20px;background:#fff;border:1px solid #bdbdbd;"></div>
<div style="left:286px;top:368px;width:234px;height:20px;background:#fff;border:1px solid #bdbdbd;"></div>
<div style="left:286px;top:390px;width:234px;height:20px;background:#fff;border:1px solid #bdbdbd;"></div>
<div style="left:286px;top:412px;width:234px;height:20px;background:#fff;border:1px solid #bdbdbd;"></div>
<div style="left:286px;top:434px;width:234px;height:20px;background:#fff;border:1px solid #bdbdbd;"></div>
<span style="left:291.30px;top:350.90px;font-size:13px;line-height:13px;color:#1e1e1e;transform:scaleX(0.890);">DC yrityksen lähetys</span>
<span style="left:291.30px;top:395.00px;font-size:13px;line-height:13px;color:#1e1e1e;transform:scaleX(0.886);">Ääkköskuja 1</span>
<span style="left:291.30px;top:417.00px;font-size:13px;line-height:13px;color:#1e1e1e;transform:scaleX(0.931);">11111 Testilä</span>
<span style="left:285.70px;top:463.20px;font-size:13px;line-height:13px;color:#1e1e1e;transform:scaleX(0.920);">Viitteenne</span>
<div style="left:386px;top:459px;width:134px;height:20px;background:#fff;border:1px solid #bdbdbd;"></div>
<div style="left:499px;top:460px;width:1px;height:18px;background:#bdbdbd;"></div>
<span style="left:390.90px;top:463.20px;font-size:13px;line-height:13px;color:#1e1e1e;transform:scaleX(0.936);">toinen osoite</span>
<svg style="left:503px;top:462px;" width="14" height="14" viewBox="0 0 14 14"><circle cx="6.6" cy="6.2" r="5.4" fill="none" stroke="#1a82d8" stroke-width="1.2"/><path d="M3.2 5.2a3.6 3.6 0 0 1 2.4-2.6" fill="none" stroke="#1a82d8" stroke-width="0.8"/><path d="M10.3 10.2l3 3.2" stroke="#1a82d8" stroke-width="1.5"/></svg>
<span style="left:535.90px;top:300.45px;font-size:14px;line-height:14px;color:#1a6cb8;transform:scaleX(0.928);">Tilaajan tiedot</span>
<div style="left:532px;top:315px;width:247px;height:1px;background:#e3e3e3;"></div>
<div style="left:541px;top:321px;width:117px;height:20px;background:#fff;border:1px solid #bdbdbd;"></div>
<div style="left:637px;top:322px;width:1px;height:18px;background:#bdbdbd;"></div>
<span style="left:547.50px;top:325.20px;font-size:13px;line-height:13px;color:#7a7a7a;transform:scaleX(0.919);font-style:italic;">Numero</span>
<svg style="left:641px;top:324px;" width="14" height="14" viewBox="0 0 14 14"><circle cx="6.6" cy="6.2" r="5.4" fill="none" stroke="#1a82d8" stroke-width="1.2"/><path d="M3.2 5.2a3.6 3.6 0 0 1 2.4-2.6" fill="none" stroke="#1a82d8" stroke-width="0.8"/><path d="M10.3 10.2l3 3.2" stroke="#1a82d8" stroke-width="1.5"/></svg>
<svg style="left:663px;top:321.5px;" width="19" height="19" viewBox="0 0 19 19"><circle cx="9.5" cy="9.500" r="9" fill="#8fc9ef"/><path d="M6.200 3.200L9.800 2.300L10.800 4.300L9.300 5.800L10.300 7.300L9 9H7.500L6.700 10.600L5.500 8.300L4.300 6.200z" fill="#fff"/><path d="M7.800 10.500L10.500 11L11 13L9.600 15.400L8.600 16.700L8 13.500L6.800 12z" fill="#fff"/><path d="M12.600 5.800L14.200 6.800L13.700 9.600L12.500 8.600z" fill="#fff"/><path d="M5 9.500l1 2.500l-.3 2l-1.300-1.800z" fill="#fff" opacity=".8"/></svg>
<div style="left:541px;top:347px;width:234px;height:20px;background:#fff;border:1px solid #bdbdbd;"></div>
<div style="left:541px;top:371px;width:234px;height:20px;background:#fff;border:1px solid #bdbdbd;"></div>
<div style="left:541px;top:393px;width:234px;height:20px;background:#fff;border:1px solid #bdbdbd;"></div>
<div style="left:541px;top:417px;width:234px;height:20px;background:#fff;border:1px solid #bdbdbd;"></div>
<div style="left:541px;top:439px;width:234px;height:20px;background:#fff;border:1px solid #bdbdbd;"></div>
<span style="left:792.00px;top:301.30px;font-size:13px;line-height:13px;color:#1e1e1e;transform:scaleX(0.865);">Viesti</span>
<div style="left:792px;top:325px;width:130px;height:21px;background:#fff;border:1px solid #bdbdbd;"></div>
<span style="left:797.90px;top:329.50px;font-size:13px;line-height:13px;color:#1e1e1e;transform:scaleX(0.861);">viesti</span>
<div style="left:792px;top:350px;width:130px;height:60px;background:#fff;border:1px solid #bdbdbd;"></div>
<span style="left:797.00px;top:355.00px;font-size:13px;line-height:13px;color:#1e1e1e;transform:scaleX(0.865);">Viesti</span>
<div style="left:8px;top:489px;width:904px;height:1px;background:#d9d9d9;"></div>
<div style="left:8px;top:489px;width:1px;height:220px;background:#c4c4c4;"></div>
<span style="left:16.50px;top:501.14px;font-size:12px;line-height:12px;color:#333;transform:scaleX(0.951);">Rivinäkymä</span>
<span style="left:87.00px;top:499.23px;font-size:14.5px;line-height:14.5px;color:#111;transform:scaleX(0.919);">0. (kaikki)</span>
<svg style="left:197px;top:504px;" width="7" height="4" viewBox="0 0 7 4"><path d="M0 0h7l-3.5 4z" fill="#222"/></svg>
<div style="left:208px;top:493px;width:1px;height:25px;background:#c6c6c6;"></div>
<div style="left:471px;top:493px;width:1px;height:26px;background:#c6c6c6;"></div>
<div style="left:510px;top:493px;width:1px;height:26px;background:#c6c6c6;"></div>
<svg style="left:215px;top:492px;" width="26" height="27" viewBox="0 0 26 27"><circle cx="13" cy="13.3" r="11.2" fill="none" stroke="#0b7bd3" stroke-width="2.2"/><text x="13.2" y="19.2" text-anchor="middle" font-family="Liberation Serif,serif" font-style="italic" font-weight="bold" font-size="17" fill="#0b7bd3">i</text></svg>
<svg style="left:253px;top:494px;" width="22" height="24" viewBox="0 0 22 24"><g fill="#0b7bd3"><rect x="0" y="0" width="5.2" height="5.2" rx="0.6"/><rect x="8.6" y="6.200" width="5.400" height="5.400" rx="0.6"/><rect x="8.6" y="13.500" width="5.400" height="5.400" rx="0.6"/><rect x="16" y="18.800" width="5.400" height="5.200" rx="0.6"/><circle cx="2.6" cy="21.600" r="1.500"/></g><path d="M2.600 5v16M2.600 8.900h6M2.600 16.200h6M11.300 18.900v2.500h5" fill="none" stroke="#0b7bd3" stroke-width="1.400"/></svg>
<svg style="left:288px;top:494px;" width="24" height="24" viewBox="0 0 24 24"><path d="M1.2 1.200h12.500l5 5v5M1.200 1.200v21.600h9" fill="none" stroke="#0b7bd3" stroke-width="2.200"/><path d="M13.700 1.200v5h5" fill="none" stroke="#0b7bd3" stroke-width="1.500"/><path d="M4.500 11.500h6.500M4.500 13.800h5.500M4.500 16.100h5M4.500 18.400h5" stroke="#0b7bd3" stroke-width="1"/><circle cx="17" cy="17.200" r="5.900" fill="#fff" stroke="#0b7bd3" stroke-width="1.700"/><text x="17.100" y="21.200" text-anchor="middle" font-family="Liberation Serif,serif" font-style="italic" font-weight="bold" font-size="10.500" fill="#0b7bd3">i</text></svg>
<svg style="left:326px;top:493.5px;" width="24" height="25" viewBox="0 0 24 25"><g transform="translate(24 0) scale(-1 1)"><path d="M2.300 12.500L11.800 3a5.200 5.200 0 0 1 7.400 7.400L9.200 20.400a3.300 3.300 0 0 1-4.700-4.700l9.300-9.300a1.500 1.500 0 0 1 2.200 2.200L8 16.600" fill="none" stroke="#0b7bd3" stroke-width="2.300" stroke-linecap="round" transform="translate(24 0) scale(-1 1)"/></g></svg>
<svg style="left:363.8px;top:494px;" width="25" height="24" viewBox="0 0 25 24"><rect x="0" y="0.8" width="14.200" height="4.900" fill="#0b7bd3"/><rect x="0" y="18" width="14.200" height="4.900" fill="#0b7bd3"/><rect x="12.700" y="9.400" width="11" height="5.200" fill="#fff" stroke="#0b7bd3" stroke-width="1.600"/><circle cx="5.400" cy="12" r="5.200" fill="#58a618"/><path d="M2.600 12h5.600" stroke="#fff" stroke-width="2"/><path d="M5.400 9.200v5.600" stroke="#fff" stroke-width="2"/></svg>
<svg style="left:402px;top:494px;" width="25" height="24" viewBox="0 0 25 24"><rect x="0" y="0.8" width="14.200" height="4.900" fill="#0b7bd3"/><rect x="0" y="18" width="14.200" height="4.900" fill="#0b7bd3"/><rect x="12.700" y="9.400" width="11" height="5.200" fill="#fff" stroke="#0b7bd3" stroke-width="1.600"/><circle cx="5.400" cy="12" r="5.200" fill="#d9505e"/><path d="M2.600 12h5.600" stroke="#fff" stroke-width="2"/></svg>
<svg style="left:440px;top:494px;" width="24" height="24" viewBox="0 0 24 24"><path d="M7 20.500H1.200V1.100h8.500l3 3" fill="none" stroke="#0b7bd3" stroke-width="2.200"/><path d="M7.800 4.200h9l5 5v13.500H7.800z" fill="#fff" stroke="#0b7bd3" stroke-width="2.200" stroke-linejoin="round"/><path d="M16.500 4.200v5.300h5.300" fill="none" stroke="#0b7bd3" stroke-width="1.500"/></svg>
<svg style="left:479px;top:494px;" width="24" height="24" viewBox="0 0 24 24"><path d="M21.700 5.500V1.200H2.200L13 11.800L2.200 22.400H21.700V18" fill="none" stroke="#0b7bd3" stroke-width="2.200" stroke-linejoin="miter"/></svg>
<svg style="left:520px;top:494px;" width="21" height="24" viewBox="0 0 21 24"><path d="M1.200 1.200h12.300l5.800 5.800v15.600H1.200z" fill="#fff" stroke="#0b7bd3" stroke-width="2.200" stroke-linejoin="round"/><path d="M13.500 1.200v5.800h5.800" fill="none" stroke="#0b7bd3" stroke-width="1.500"/><text x="10.400" y="19.600" text-anchor="middle" font-family="Liberation Sans,sans-serif" font-size="13.500" fill="#0b7bd3" stroke="#0b7bd3" stroke-width="0.300">%</text></svg>
<svg style="left:556px;top:494px;" width="24" height="24" viewBox="0 0 24 24"><rect x="1" y="1" width="22" height="22" fill="#fff" stroke="#0b7bd3" stroke-width="2"/><rect x="1" y="0.500" width="22" height="3.200" fill="#0b7bd3"/><rect x="9" y="11.600" width="6.500" height="4" fill="#b9dcf4"/><path d="M8.300 2v21M15.900 2v21M1 9.700h22M1 16.400h22" stroke="#0b7bd3" stroke-width="1.700"/></svg>
<svg style="left:594px;top:494px;" width="25" height="25" viewBox="0 0 25 25"><path d="M10 15.300H1.500V2h18.300v5.500" fill="none" stroke="#0b7bd3" stroke-width="2"/><rect x="0.500" y="1" width="20.300" height="3.500" fill="#0b7bd3"/><circle cx="15" cy="14.800" r="6.200" fill="#fff" stroke="#0b7bd3" stroke-width="2"/><path d="M11.700 13.500a3.800 3.800 0 0 1 2-2.800" fill="none" stroke="#0b7bd3" stroke-width="0.900"/><path d="M19.500 19.300l4.200 4.300" stroke="#0b7bd3" stroke-width="2.400"/></svg>
<svg style="left:633px;top:494px;" width="23" height="24" viewBox="0 0 23 24"><path d="M10 22.600H1.200V5.500l4.400-4.300h12.900v9" fill="none" stroke="#b9dcf4" stroke-width="2"/><path d="M5.600 1.200v4.300H1.200" fill="none" stroke="#b9dcf4" stroke-width="1.400"/><circle cx="15.500" cy="16.800" r="6.600" fill="#b9dcf4"/><path d="M11.500 16.800h7M16 13.800l3 3l-3 3" fill="none" stroke="#fff" stroke-width="1.800"/></svg>
<svg style="left:671px;top:494px;" width="20" height="24" viewBox="0 0 20 24"><g transform="rotate(45 10 12)"><rect x="6" y="-2" width="8" height="13" rx="4" fill="none" stroke="#b9dcf4" stroke-width="2.600"/><rect x="6" y="13" width="8" height="13" rx="4" fill="none" stroke="#b9dcf4" stroke-width="2.600"/><path d="M10 7v10" stroke="#b9dcf4" stroke-width="2.600"/></g></svg>
<div style="left:9px;top:523px;width:903px;height:20px;background:linear-gradient(#ffffff 0%,#fcfcfc 50%,#f0f0f0 100%);"></div>
<div style="left:9px;top:522px;width:903px;height:1px;background:#bdbdbd;"></div>
<div style="left:24px;top:544px;width:32px;height:20px;background:#edf3fb;"></div>
<div style="left:141px;top:544px;width:546px;height:20px;background:#edf3fb;"></div>
<div style="left:24px;top:565px;width:663px;height:20px;background:#fafafa;"></div>
<div style="left:9px;top:543px;width:888px;height:1px;background:#c9c9c9;"></div>
<div style="left:24px;top:564px;width:888px;height:1px;background:#c9c9c9;"></div>
<div style="left:24px;top:585px;width:888px;height:1px;background:#c9c9c9;"></div>
<div style="left:24px;top:606px;width:888px;height:1px;background:#c9c9c9;"></div>
<div style="left:24px;top:627px;width:888px;height:1px;background:#c9c9c9;"></div>
<div style="left:24px;top:523px;width:1px;height:20px;background:#cfcfcf;"></div>
<div style="left:24px;top:544px;width:1px;height:83px;background:#c3d0e4;"></div>
<div style="left:56px;top:523px;width:1px;height:20px;background:#cfcfcf;"></div>
<div style="left:56px;top:544px;width:1px;height:83px;background:#c3d0e4;"></div>
<div style="left:140px;top:523px;width:1px;height:20px;background:#cfcfcf;"></div>
<div style="left:140px;top:544px;width:1px;height:83px;background:#c3d0e4;"></div>
<div style="left:345px;top:523px;width:1px;height:20px;background:#cfcfcf;"></div>
<div style="left:345px;top:544px;width:1px;height:83px;background:#c3d0e4;"></div>
<div style="left:450px;top:523px;width:1px;height:20px;background:#cfcfcf;"></div>
<div style="left:450px;top:544px;width:1px;height:83px;background:#c3d0e4;"></div>
<div style="left:510px;top:523px;width:1px;height:20px;background:#cfcfcf;"></div>
<div style="left:510px;top:544px;width:1px;height:83px;background:#c3d0e4;"></div>
<div style="left:571px;top:523px;width:1px;height:20px;background:#cfcfcf;"></div>
<div style="left:571px;top:544px;width:1px;height:83px;background:#c3d0e4;"></div>
<div style="left:672px;top:523px;width:1px;height:20px;background:#cfcfcf;"></div>
<div style="left:672px;top:544px;width:1px;height:83px;background:#c3d0e4;"></div>
<div style="left:25px;top:544px;width:31px;height:20px;background:#eef4fc;"></div>
<div style="left:141px;top:544px;width:546px;height:20px;background:#eef4fc;"></div>
<span style="left:29.50px;top:526.50px;font-size:13px;line-height:13px;color:#1e1e1e;transform:scaleX(0.835);">Pos</span>
<span style="left:61.50px;top:526.50px;font-size:13px;line-height:13px;color:#1e1e1e;transform:scaleX(0.917);">Koodi</span>
<span style="left:145.50px;top:526.50px;font-size:13px;line-height:13px;color:#1e1e1e;transform:scaleX(0.957);">Nimike</span>
<span style="left:350.80px;top:526.50px;font-size:13px;line-height:13px;color:#1e1e1e;transform:scaleX(0.907);">Lisänimike</span>
<span style="left:456.30px;top:526.50px;font-size:13px;line-height:13px;color:#1e1e1e;transform:scaleX(0.862);">Kpl</span>
<span style="left:515.30px;top:526.50px;font-size:13px;line-height:13px;color:#1e1e1e;transform:scaleX(0.886);">Yksikko</span>
<span style="left:575.80px;top:526.50px;font-size:13px;line-height:13px;color:#1e1e1e;transform:scaleX(0.889);">Ovh</span>
<span style="left:677.80px;top:526.50px;font-size:13px;line-height:13px;color:#1e1e1e;transform:scaleX(0.900);">A</span>
<span style="left:30.00px;top:547.70px;font-size:13px;line-height:13px;color:#1e1e1e;transform:scaleX(0.900);">1</span>
<span style="left:60.50px;top:547.70px;font-size:13px;line-height:13px;color:#1e1e1e;transform:scaleX(0.870);">K00500</span>
<span style="left:145.00px;top:547.70px;font-size:13px;line-height:13px;color:#50555c;transform:scaleX(0.896);">Kiintoavain</span>
<span style="left:484.00px;top:547.70px;font-size:13px;line-height:13px;color:#333;transform:scaleX(0.830);">8,00</span>
<span style="left:514.50px;top:547.70px;font-size:13px;line-height:13px;color:#333;transform:scaleX(0.933);">kpl</span>
<span style="left:623.30px;top:547.70px;font-size:13px;line-height:13px;color:#333;transform:scaleX(0.873);">6 666,00</span>
<span style="left:61.50px;top:567.70px;font-size:13px;line-height:13px;color:#1e1e1e;transform:scaleX(0.700);">_</span>
<span style="left:145.00px;top:568.70px;font-size:13px;line-height:13px;color:#1e1e1e;transform:scaleX(0.920);">tekstirivi</span>
<span style="left:645.80px;top:568.70px;font-size:13px;line-height:13px;color:#1e1e1e;transform:scaleX(0.858);">0,00</span>
<span style="left:29.50px;top:589.70px;font-size:13px;line-height:13px;color:#1e1e1e;transform:scaleX(0.900);">2</span>
<span style="left:60.50px;top:589.70px;font-size:13px;line-height:13px;color:#1e1e1e;transform:scaleX(0.885);">00200</span>
<span style="left:145.00px;top:589.70px;font-size:13px;line-height:13px;color:#1e1e1e;transform:scaleX(0.848);">Uusi2</span>
<span style="left:484.50px;top:589.70px;font-size:13px;line-height:13px;color:#1e1e1e;transform:scaleX(0.810);">1,00</span>
<span style="left:645.80px;top:589.70px;font-size:13px;line-height:13px;color:#1e1e1e;transform:scaleX(0.858);">0,00</span>
<svg style="left:12px;top:550px;" width="9" height="9" viewBox="0 0 9 9"><path d="M0.600 8.400l0.800-2.600l4.300-4.300l1.800 1.800l-4.300 4.300z" fill="#333"/><path d="M6.300 0.900l0.700-0.700l1.800 1.800l-0.700 0.700z" fill="#333"/></svg>
<svg style="left:12.5px;top:613px;" width="8" height="8" viewBox="0 0 8 8"><g stroke="#333" stroke-width="1.300"><path d="M4 0v8M0 4h8M1.200 1.200l5.600 5.600M6.800 1.200l-5.600 5.600"/></g><circle cx="4" cy="4" r="2" fill="#333"/></svg>
<div style="left:8px;top:708px;width:904px;height:1px;background:#c4c4c4;"></div>
<div style="left:9px;top:685px;width:16px;height:23px;background:#fff;border:1px solid #c9c9c9;border-left:none;border-bottom:none;"></div>
<div style="left:27px;top:689px;width:15px;height:15px;background:#f8f8f8;"></div>
<svg style="left:32px;top:692px;" width="6" height="9" viewBox="0 0 6 9"><path d="M5 0.700L1.200 4.500L5 8.300" fill="none" stroke="#333" stroke-width="1.300"/></svg>
<div style="left:47px;top:692px;width:546px;height:9px;background:#d5d5d5;border-radius:4.5px;"></div>
<span style="left:62.80px;top:715.30px;font-size:13px;line-height:13px;color:#333;transform:scaleX(0.919);">Veroton</span>
<div style="left:113px;top:711px;width:93px;height:20px;background:#f1f1f1;border:1px solid #bdbdbd;"></div>
<span style="left:117.00px;top:715.50px;font-size:13px;line-height:13px;color:#1e1e1e;transform:scaleX(0.890);">43 006,45</span>
<span style="left:290.90px;top:715.30px;font-size:13px;line-height:13px;color:#333;transform:scaleX(0.864);">Alv</span>
<div style="left:315px;top:711px;width:93px;height:20px;background:#f1f1f1;border:1px solid #bdbdbd;"></div>
<span style="left:320.50px;top:715.50px;font-size:13px;line-height:13px;color:#1e1e1e;transform:scaleX(0.865);">10 321,55</span>
<span style="left:461.80px;top:715.30px;font-size:13px;line-height:13px;color:#333;transform:scaleX(0.882);">Pyöristys</span>
<div style="left:517px;top:711px;width:53px;height:20px;background:#f1f1f1;border:1px solid #bdbdbd;"></div>
<span style="left:521.90px;top:715.50px;font-size:13px;line-height:13px;color:#1e1e1e;transform:scaleX(0.850);">0,00</span>
<div style="left:578px;top:711px;width:140px;height:20px;background:#f1f1f1;border:1px solid #bdbdbd;"></div>
<span style="left:583.70px;top:715.50px;font-size:13px;line-height:13px;color:#1e1e1e;transform:scaleX(0.849);">53 328,00</span>
<div style="left:4px;top:742px;width:908px;height:20px;background:#004b78;"></div>
<div style="left:4px;top:761px;width:155px;height:1px;background:rgba(4,26,59,0.35);"></div>
<div style="left:159px;top:761px;width:352px;height:1px;background:rgba(255,255,255,0.35);"></div>
<span style="left:7.50px;top:746.34px;font-size:12px;line-height:12px;color:#fff;transform:scaleX(0.942);">Laskutus/myyntireskontra 10.5.2211.2914</span>
<div style="left:258px;top:745px;width:1px;height:15px;background:#7f9db8;"></div>
<div style="left:159px;top:762px;width:352px;height:3px;overflow:hidden;">
<span style="left:291.50px;top:-1.36px;font-size:12px;line-height:12px;color:#222;transform:scaleX(1.030);">Events</span>
</div>
<div style="left:686px;top:396px;width:226px;height:369px;background:#f0f0f0;border:1px solid #6e6e6e;border-right:none;border-bottom:none;"></div>
<div style="left:687px;top:397px;width:225px;height:30px;background:#fff;"></div>
<svg style="left:696.9px;top:403px;" width="13" height="17" viewBox="0 0 13 17"><rect x="1" y="1.900" width="11.200" height="14.100" fill="#c5d2e8" stroke="#2d4d8f" stroke-width="1.100"/><rect x="0.500" y="15" width="12.200" height="1.500" fill="#2d4d8f"/><rect x="2.600" y="3.300" width="7.900" height="10.900" fill="#fafafa"/><rect x="4.500" y="0.600" width="4.100" height="3.300" rx="0.900" fill="#8e8e8e"/></svg>
<span style="left:716.00px;top:405.96px;font-size:12.1px;line-height:12.1px;color:#000;transform:scaleX(0.960);">Varastokirjanpito - Visma Nova: Visma</span>
<div style="left:687px;top:427px;width:225px;height:24px;background:#005a9e;"></div>
<span style="left:703.00px;top:433.82px;font-size:12.5px;line-height:12.5px;color:#fff;transform:scaleX(0.969);">Tiedosto</span>
<span style="left:769.00px;top:433.82px;font-size:12.5px;line-height:12.5px;color:#fff;transform:scaleX(0.913);">Muokkaa</span>
<span style="left:834.50px;top:433.82px;font-size:12.5px;line-height:12.5px;color:#fff;transform:scaleX(0.908);">Haku</span>
<span style="left:881.00px;top:433.82px;font-size:12.5px;line-height:12.5px;color:#fff;transform:scaleX(1.010);">Raportit</span>
<svg style="left:694px;top:459px;" width="22" height="22" viewBox="0 0 22 22"><path d="M0.500 1.500a1 1 0 0 1 1-1h19a1 1 0 0 1 1 1v20h-20.500z" fill="#a9a9a9"/><rect x="4" y="0.800" width="14" height="9" fill="#dcdcdc"/><rect x="4.500" y="13.500" width="13" height="8.500" fill="#cfcfcf"/><rect x="6" y="15" width="3" height="6" fill="#a0a0a0"/></svg>
<svg style="left:726px;top:457px;" width="30" height="25" viewBox="0 0 30 25"><path d="M28.300 1v21.800H1z" fill="#e8b04a" stroke="#c98e2a" stroke-width="1"/><path d="M23.800 11.500v7.300H14.500z" fill="#f0f0f0" stroke="#c98e2a" stroke-width="0.800"/><path d="M5 20.500v2M8 20.500v2M11 20.500v2M14 20.500v2M17 20.500v2M20 20.500v2M23 20.500v2M26 20.500v2" stroke="#a87418" stroke-width="0.700"/><path d="M1.800 10.300l2.200-2.200l12.800 12.800l0.700 3.400l-3.400-0.900z" fill="#f08a24" stroke="#b45a10" stroke-width="0.600"/><circle cx="2.800" cy="9" r="1.600" fill="#d23030"/><path d="M17.500 24.300l-0.400-1.700l-1.300 1.200z" fill="#333"/></svg>
<svg style="left:766px;top:459px;" width="24" height="22" viewBox="0 0 24 22"><path d="M5.500 8.500c3-5 9-7.500 13.500-5c4.500 2.600 3.500 10-2 17" fill="none" stroke="#b4b4b4" stroke-width="4.200"/><path d="M0.500 2.500l9.500 1.200l-5.500 8.300z" fill="#b4b4b4"/><path d="M13 19.500h8" stroke="#dedede" stroke-width="1.500"/></svg>
<div style="left:797px;top:453px;width:1px;height:35px;background:#6a6a6a;"></div>
<svg style="left:808px;top:457px;" width="22" height="26" viewBox="0 0 22 26"><circle cx="8.500" cy="8.500" r="7.200" fill="#dbeaf6" stroke="#4f4f4f" stroke-width="2"/><path d="M4.500 6.500a4.500 4.500 0 0 1 3.500-2.500" stroke="#fff" stroke-width="1.300" fill="none"/><path d="M13.500 14.500l6.300 8.500" stroke="#8d8d8d" stroke-width="3.600" stroke-linecap="round"/><path d="M13 14l2 2.500" stroke="#4f4f4f" stroke-width="2.400"/></svg>
<span style="left:849.00px;top:464.00px;font-size:13px;line-height:13px;color:#000;transform:scaleX(0.908);">Näkymä</span>
<div style="left:907px;top:461px;width:10px;height:21px;background:#fff;"></div>
<span style="left:908.50px;top:464.84px;font-size:12px;line-height:12px;color:#000;">0</span>
<span style="left:694.00px;top:504.07px;font-size:11.5px;line-height:11.5px;color:#000;transform:scaleX(0.921);">Tuotekoodi</span>
<div style="left:781px;top:499px;width:140px;height:21px;background:#f0f0f0;border:1px solid #7a7a7a;"></div>
<span style="left:783.50px;top:504.07px;font-size:11.5px;line-height:11.5px;color:#6d6d6d;transform:scaleX(0.908);">K00500</span>
<span style="left:694.00px;top:529.07px;font-size:11.5px;line-height:11.5px;color:#000;transform:scaleX(0.839);">Nimike</span>
<div style="left:781px;top:524px;width:140px;height:21px;background:#fff;border:1px solid #7a7a7a;"></div>
<span style="left:783.50px;top:529.07px;font-size:11.5px;line-height:11.5px;color:#000;transform:scaleX(0.906);">Kiintoavain</span>
<span style="left:694.00px;top:554.07px;font-size:11.5px;line-height:11.5px;color:#000;transform:scaleX(0.856);">Lisänimike</span>
<div style="left:781px;top:549px;width:140px;height:21px;background:#fff;border:1px solid #7a7a7a;"></div>
<span style="left:694.00px;top:579.07px;font-size:11.5px;line-height:11.5px;color:#000;transform:scaleX(0.909);">Piirustusnumero</span>
<div style="left:781px;top:574px;width:140px;height:21px;background:#fff;border:1px solid #7a7a7a;"></div>
<span style="left:694.00px;top:629.07px;font-size:11.5px;line-height:11.5px;color:#000;transform:scaleX(0.945);">Ohjehinta</span>
<div style="left:781px;top:624px;width:100px;height:21px;background:#fff;border:1px solid #7a7a7a;"></div>
<span style="left:783.50px;top:629.07px;font-size:11.5px;line-height:11.5px;color:#000;transform:scaleX(0.922);">20</span>
<span style="left:894.30px;top:629.07px;font-size:11.5px;line-height:11.5px;color:#000;transform:scaleX(0.860);">Pakkaus</span>
<span style="left:694.00px;top:654.07px;font-size:11.5px;line-height:11.5px;color:#000;transform:scaleX(0.858);">Yksikkö</span>
<div style="left:781px;top:649px;width:100px;height:21px;background:#fff;border:1px solid #7a7a7a;"></div>
<span style="left:783.50px;top:654.07px;font-size:11.5px;line-height:11.5px;color:#000;transform:scaleX(0.884);">kpl</span>
<span style="left:894.30px;top:654.07px;font-size:11.5px;line-height:11.5px;color:#000;transform:scaleX(0.860);">ABCkaus</span>
<span style="left:694.00px;top:679.07px;font-size:11.5px;line-height:11.5px;color:#000;transform:scaleX(0.957);">Toimittaja</span>
<div style="left:781px;top:674px;width:100px;height:21px;background:#fff;border:1px solid #7a7a7a;"></div>
<span style="left:783.50px;top:679.07px;font-size:11.5px;line-height:11.5px;color:#000;transform:scaleX(0.938);">50004</span>
<span style="left:894.30px;top:679.07px;font-size:11.5px;line-height:11.5px;color:#000;transform:scaleX(0.860);">Painkaus</span>
<span style="left:694.00px;top:704.07px;font-size:11.5px;line-height:11.5px;color:#000;transform:scaleX(0.905);">Pakk.koko</span>
<div style="left:781px;top:699px;width:100px;height:21px;background:#fff;border:1px solid #7a7a7a;"></div>
<span style="left:784.00px;top:704.07px;font-size:11.5px;line-height:11.5px;color:#000;transform:scaleX(0.950);">0</span>
<span style="left:894.30px;top:704.07px;font-size:11.5px;line-height:11.5px;color:#000;transform:scaleX(0.860);">Kollikaus</span>
<span style="left:694.00px;top:729.07px;font-size:11.5px;line-height:11.5px;color:#000;transform:scaleX(0.907);">Tilauserä</span>
<div style="left:781px;top:724px;width:82px;height:21px;background:#fff;border:1px solid #7a7a7a;"></div>
<div style="left:867px;top:727.5px;width:13px;height:13px;background:#fff;border:1px solid #d4d4d4;"></div>
<span style="left:784.00px;top:729.07px;font-size:11.5px;line-height:11.5px;color:#000;transform:scaleX(0.950);">0</span>
<span style="left:894.30px;top:729.07px;font-size:11.5px;line-height:11.5px;color:#000;transform:scaleX(0.860);">Myykaus</span>
<span style="left:694.00px;top:754.07px;font-size:11.5px;line-height:11.5px;color:#000;transform:scaleX(0.933);">Hinnat per</span>
<div style="left:781px;top:749px;width:100px;height:21px;background:#fff;border:1px solid #7a7a7a;"></div>
<span style="left:784.00px;top:754.07px;font-size:11.5px;line-height:11.5px;color:#000;transform:scaleX(0.950);">0</span>
<span style="left:894.30px;top:754.07px;font-size:11.5px;line-height:11.5px;color:#000;transform:scaleX(0.860);">Ostkaus</span>
<svg style="left:758.5px;top:498.9px;" width="17" height="17" viewBox="0 0 17 17"><rect x="0" y="0" width="17" height="16.500" fill="#f7f7f7"/><path d="M7.300 0.900L15.300 14.700H0.700z" fill="#ffff00"/><path d="M6.600 1h1.300l8 13.600" fill="none" stroke="#111" stroke-width="1.700"/><path d="M0.700 15.100h15.200" stroke="#111" stroke-width="1.500"/><path d="M7.600 5.200v3.800" stroke="#000" stroke-width="2.600" stroke-linecap="round"/><circle cx="7.600" cy="12.600" r="1.250" fill="#000"/></svg>
<svg style="left:762.3px;top:676.4px;" width="17" height="17" viewBox="0 0 17 17"><rect x="0" y="0" width="17" height="16.500" fill="#f7f7f7"/><path d="M7.300 0.900L15.300 14.700H0.700z" fill="#ffff00"/><path d="M6.600 1h1.300l8 13.600" fill="none" stroke="#111" stroke-width="1.700"/><path d="M0.700 15.100h15.200" stroke="#111" stroke-width="1.500"/><path d="M7.600 5.200v3.800" stroke="#000" stroke-width="2.600" stroke-linecap="round"/><circle cx="7.600" cy="12.600" r="1.250" fill="#000"/></svg>
<div style="left:784px;top:528px;width:1px;height:13px;background:#000;"></div>
<svg style="left:445px;top:517px;" width="233" height="54" viewBox="0 0 233 54"><rect x="3.70" y="3.70" width="224.60" height="45.70" rx="1.2" fill="none" stroke="#f8000a" stroke-width="3.2"/></svg>
<svg style="left:680px;top:607px;" width="211" height="46" viewBox="0 0 211 46"><rect x="3.65" y="4.45" width="202.10" height="36.90" rx="1.2" fill="none" stroke="#f8000a" stroke-width="3.1"/></svg>
</div></body></html>
